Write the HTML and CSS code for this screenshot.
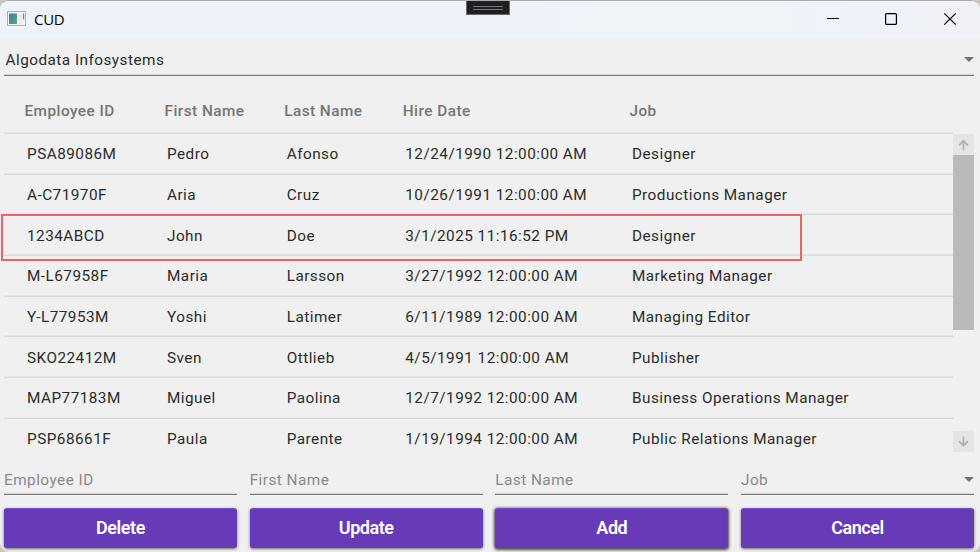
FILE: index.html
```html
<!DOCTYPE html>
<html lang="en">
<head>
<meta charset="utf-8">
<title>CUD</title>
<link rel="stylesheet" href="styles.css">
</head>
<body>
<div class="window">
  <header class="titlebar">
    <svg class="app-icon" width="19" height="15" viewBox="0 0 19 15">
      <defs><linearGradient id="pane" x1="0" y1="0" x2="1" y2="1"><stop offset="0" stop-color="#4b74b4"/><stop offset=".5" stop-color="#46948a"/><stop offset="1" stop-color="#58ae70"/></linearGradient></defs>
      <rect x=".5" y=".5" width="18" height="14" fill="#f3f5f6" stroke="#aab0b5"/>
      <rect x="2" y="2.5" width="8" height="10.5" fill="url(#pane)"/>
      <rect x="12" y="3" width="3" height="10" fill="#e8eaec"/>
      <rect x="16" y="2.5" width="1.2" height="6" fill="url(#pane)"/>
    </svg>
    <span class="title">CUD</span>
    <svg class="controls" width="132" height="14" viewBox="0 0 132 14" fill="none" stroke="#000">
      <path d="M0 6.5H12" stroke-width="1.1"/>
      <rect x="58.6" y="1.6" width="10.8" height="10.8" rx="1" stroke-width="1.2"/>
      <path d="M117.3 1.3L128.7 12.7M128.7 1.3L117.3 12.7" stroke-width="1.2"/>
    </svg>
  </header>
  <div class="debug-handle"><span></span></div>

  <main class="content">
    <div class="field publisher"><span>Algodata Infosystems</span><i class="caret"></i></div>

    <section class="grid">
      <div class="row head"><span>Employee ID</span><span>First Name</span><span>Last Name</span><span>Hire Date</span><span>Job</span></div>
      <div class="body">
        <div class="rows">
          <div class="row"><span>PSA89086M</span><span>Pedro</span><span>Afonso</span><span>12/24/1990 12:00:00 AM</span><span>Designer</span></div>
          <div class="row"><span>A-C71970F</span><span>Aria</span><span>Cruz</span><span>10/26/1991 12:00:00 AM</span><span>Productions Manager</span></div>
          <div class="row marked"><span>1234ABCD</span><span>John</span><span>Doe</span><span>3/1/2025 11:16:52 PM</span><span>Designer</span></div>
          <div class="row"><span>M-L67958F</span><span>Maria</span><span>Larsson</span><span>3/27/1992 12:00:00 AM</span><span>Marketing Manager</span></div>
          <div class="row"><span>Y-L77953M</span><span>Yoshi</span><span>Latimer</span><span>6/11/1989 12:00:00 AM</span><span>Managing Editor</span></div>
          <div class="row"><span>SKO22412M</span><span>Sven</span><span>Ottlieb</span><span>4/5/1991 12:00:00 AM</span><span>Publisher</span></div>
          <div class="row"><span>MAP77183M</span><span>Miguel</span><span>Paolina</span><span>12/7/1992 12:00:00 AM</span><span>Business Operations Manager</span></div>
          <div class="row last"><span>PSP68661F</span><span>Paula</span><span>Parente</span><span>1/19/1994 12:00:00 AM</span><span>Public Relations Manager</span></div>
        </div>
        <div class="scrollbar">
          <div class="arrow"><svg width="11" height="11" viewBox="0 0 11 11"><path d="M5.5 11V2M1 6.3L5.5 1.8L10 6.3"/></svg></div>
          <div class="thumb"></div>
          <div class="arrow end"><svg width="11" height="11" viewBox="0 0 11 11"><path d="M5.5 .5V9.5M1 5.2L5.5 9.7L10 5.2"/></svg></div>
        </div>
      </div>
    </section>

    <div class="form">
      <div class="field hint"><span>Employee ID</span></div>
      <div class="field hint"><span>First Name</span></div>
      <div class="field hint"><span>Last Name</span></div>
      <div class="field hint"><span>Job</span><i class="caret"></i></div>
    </div>
    <div class="actions">
      <button>Delete</button>
      <button>Update</button>
      <button class="hot">Add</button>
      <button>Cancel</button>
    </div>
  </main>
</div>
</body>
</html>
```
FILE: styles.css
```css
*, *::after { box-sizing: border-box; }
body {
  margin: 0;
  background: #c9c7bf;
  font-family: Roboto, "Liberation Sans", sans-serif;
  font-size: 15.3px;
  letter-spacing: .48px;
  color: #2b2b2b;
}
.window {
  position: relative;
  height: 552px;
  overflow: hidden;
  border-top: 1px solid #ababab;
  border-radius: 9px;
  background: #f0f0f0;
}
.titlebar {
  display: flex;
  align-items: center;
  height: 37px;
  padding: 0 21px 2px 7px;
  background: linear-gradient(90deg, #eef3fb 0%, #eef3fb 52%, #eef4f8 62%, #eef4f8 78%, #eff2fb 88%, #f1f2f6 100%);
}
.title {
  margin-left: 8px;
  font: 15px "Open Sans", "Noto Sans", sans-serif;
  letter-spacing: -.3px;
  color: #000;
}
.controls { margin-left: auto; }
.debug-handle {
  position: absolute;
  top: -1px;
  left: 466px;
  width: 44px;
  height: 15px;
  padding: 6px 6px 0;
  border: 1px solid #6b6b6b;
  border-top-color: #555;
  background: #1f1f1f;
}
.debug-handle span {
  display: block;
  height: 4px;
  margin-top: -1px;
  border: solid #777;
  border-width: 1px 0;
}
.content { padding: 0 6px 0 4px; }
.field {
  display: flex;
  align-items: center;
  justify-content: space-between;
  border-bottom: 1px solid #7a7a7a;
  box-shadow: inset 0 -1px #d2d2d2;
}
.publisher { height: 38px; padding: 6px 0 0 1.5px; }
.caret {
  border: 5px solid transparent;
  border-top-color: #747474;
  border-bottom: 0;
}
.grid { height: 376px; }
.row {
  display: grid;
  grid-template-columns: 140px 119.7px 118.6px 226.7px 1fr;
  align-items: center;
  height: 40.7px;
  padding: .9px 0 0 23px;
  border-bottom: 1px solid #d9d9d9;
  box-shadow: inset 0 -1px #e6e6e6;
  white-space: nowrap;
}
.row.head {
  height: 58px;
  width: 949px;
  padding: 13px 0 0 20.5px;
  font-weight: 500;
  color: #757575;
}
.row.last { padding-top: 0; border-color: transparent; box-shadow: none; }
.body { display: flex; height: 318px; }
.rows { width: 949px; }
.marked { position: relative; }
.marked::after {
  content: "";
  position: absolute;
  left: -3px;
  top: -1px;
  width: 801px;
  height: 47px;
  border: 2px solid #ea6469;
}
.scrollbar { display: flex; flex-direction: column; width: 21px; }
.arrow {
  display: grid;
  place-items: center;
  height: 21px;
  background: #e5e5e5;
}
.arrow path { fill: none; stroke: #b0b0b0; stroke-width: 1.7; }
.thumb { height: 175px; background: #bababa; }
.end { margin-top: auto; }
.form, .actions {
  display: grid;
  grid-template-columns: repeat(4, 233px);
  justify-content: space-between;
}
.form { margin-top: 10px; }
.hint { height: 33px; padding-top: 4px; color: #8a8a8a; }
.hint .caret { margin-top: -1px; }
.actions { margin-top: 13px; }
button {
  height: 40px;
  padding: 0 0 2px;
  border: 1px solid #673ab7;
  border-color: #7a52c0 #6a3db8 #673ab7;
  border-radius: 3px;
  background: #673ab7;
  box-shadow: 0 1px 3px rgba(0,0,0,.55);
  color: #fff;
  font: 600 18px Roboto, sans-serif;
  letter-spacing: -.45px;
}
.hot { box-shadow: 0 1px 3px 1px rgba(0,0,0,.7); }
```
